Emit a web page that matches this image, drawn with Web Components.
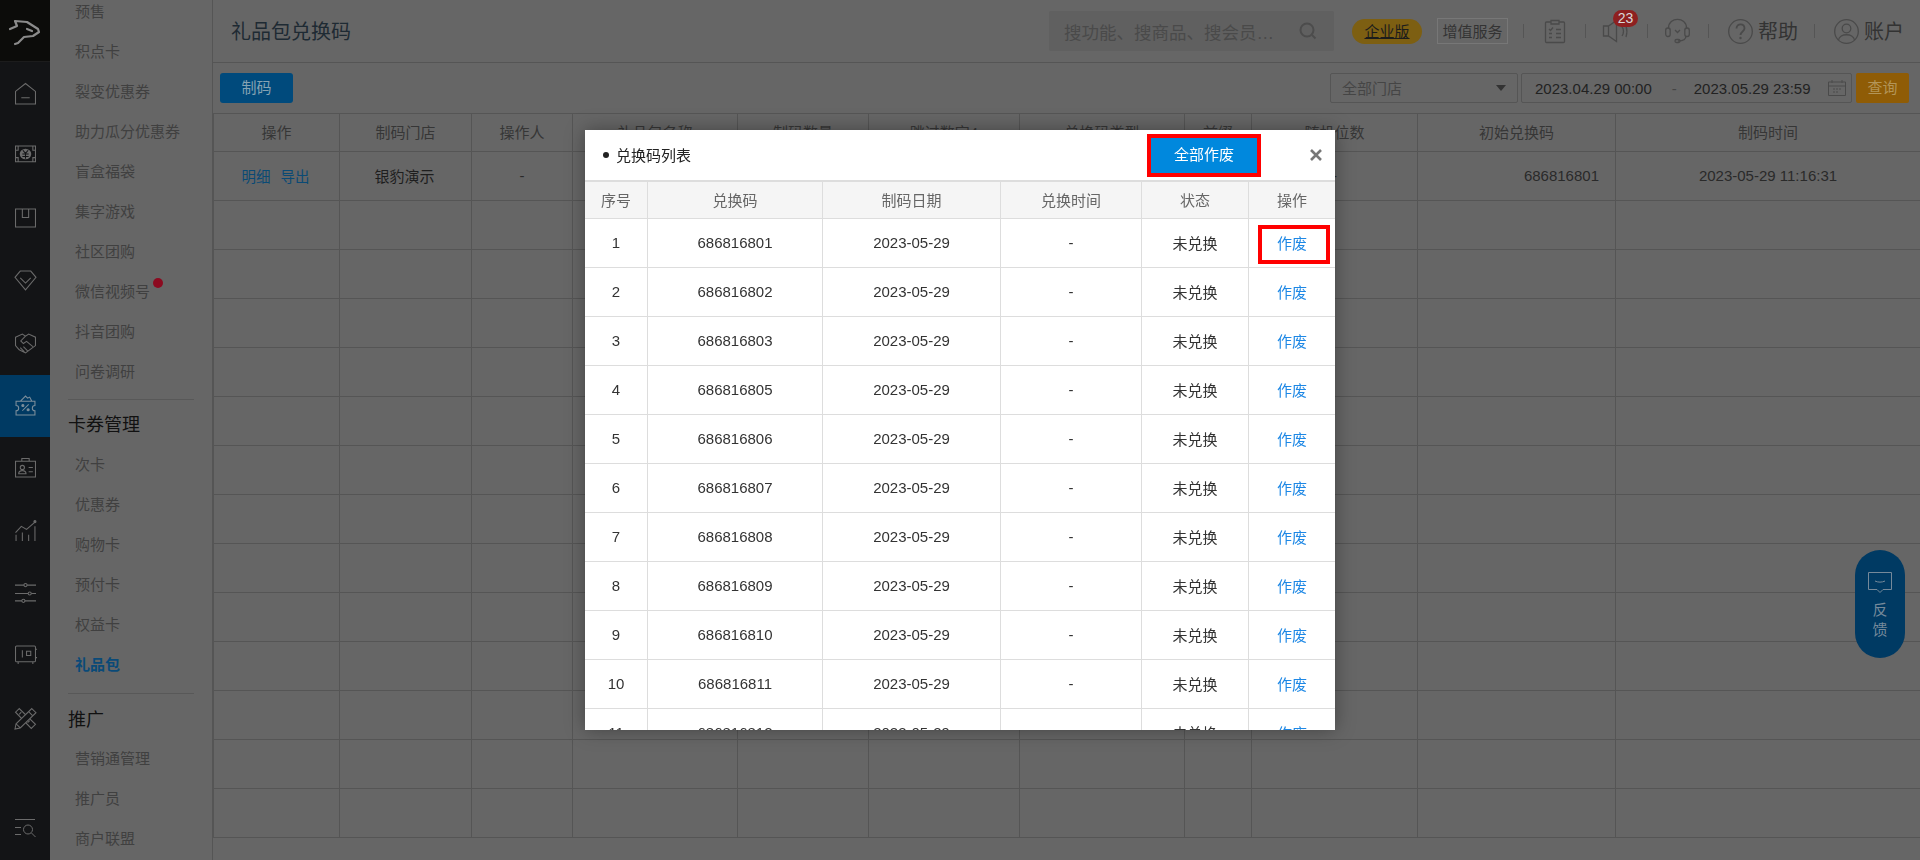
<!DOCTYPE html>
<html lang="zh">
<head>
<meta charset="utf-8">
<title>礼品包兑换码</title>
<style>
html, body { margin: 0; height: 100%; overflow: hidden; }
body {
  display: flex;
  height: 860px;
  background: #666;
  font: 15px "Liberation Sans", "Noto Sans CJK SC", sans-serif;
  color: #2a2a2a;
}
</style>
</head>
<body>
<app-rail></app-rail>
<app-menu></app-menu>
<app-main></app-main>
<feedback-fab>反<br>馈</feedback-fab>
<redeem-dialog></redeem-dialog>

<script>
const railIcons = [
  '<path d="M.5 8 10 .5 19.5 8v12H.5zM6 14h8"/>',
  '<path d="M.5 1h19v15H.5zM.5 5H3V1M19.5 5H17V1M.5 12H3v4M19.5 12H17v4"/><ellipse cx="10" cy="8.5" rx="5.5" ry="5" fill="currentColor" stroke="none"/><path d="m7.5 5 2.500 3 2.500-3M7 8.500h6M7 11h6M10 8.500V13" stroke="#131416"/>',
  '<path d="M.5 1h19v17H.5zM7 1v8h6V1"/>',
  '<path d="M5 1h10l5 6-10 12L0 7zM5 7.500l5 5 5-5"/>',
  '<path d="M.5 4 7 1l3 2 3-2 6.500 3v8L10 19l-6-3-3.500-4zM10 3 5.500 7.500 8 10l3-2 6 5M8 13l4 4M5 14l4 4"/>',
  '<path d="M1 6h18v4a2.500 2.500 0 0 0 0 5v4H1v-4a2.500 2.500 0 0 0 0-5zM5 6l5-5 2 2 2-1 2 4M7 15l6-6"/><circle cx="7.500" cy="10" r="1" fill="currentColor"/><circle cx="12.500" cy="14" r="1" fill="currentColor"/>',
  '<path d="M.5 3h19v15H.5zM6.500 3V.5h7V3"/><circle cx="7" cy="9" r="2"/><path d="M3.500 15c0-4 7-4 7 0zM13 9h4M13 13h4"/>',
  '<path d="M1 20v-6M7 20v-8M13 20v-6M19 20V6M.5 12 6 6l5 3 8-7"/><circle cx="19" cy="1.500" r="1" fill="currentColor"/>',
  '<path d="M0 2h20M0 10h20M0 17h20"/><circle cx="10" cy="2" r="1.500" fill="#131416"/><circle cx="14" cy="10" r="1.500" fill="#131416"/><circle cx="8" cy="17" r="1.500" fill="#131416"/>',
  '<path d="M1.500 1h17a1 1 0 0 1 1 1v13a1 1 0 0 1-1 1h-17a1 1 0 0 1-1-1V2a1 1 0 0 1 1-1zM7 5v7M11 6h4v4h-4zM3 16v2M17 16v2M19.500 4H21M19.500 12H21"/>',
  '<path d="M4 .5.500 4l15 15.500 4-4zM4 6l2-2M8 10l2-2M12 14l2-2"/><path d="M16 .5 20 4.500 5 19l-5 1 1-5zM13 3.500l3.500 3.500M1 15l4 4" fill="#131416"/>'
]

const railTemplate = document.createElement("template")
railTemplate.innerHTML = `
<style>
:host { display: flex; flex-direction: column; flex: none; width: 50px; height: 860px; background: #131416; color: #6b6b6b; }
.logo { height: 62px; flex: none; background: #0c0c0a; border-bottom: 1px solid #1c1c1c; box-sizing: border-box; color: #8b8b8b; }
.logo svg { display: block; width: 50px; height: 62px; }
.row { height: 62.5px; flex: none; display: flex; align-items: center; justify-content: center; }
.row svg { width: 21px; height: 21px; overflow: visible; }
.on { background: #003a63; color: #7d8f9c; }
.end { margin-top: auto; }
</style>
<div class="logo">
  <svg viewBox="0 0 50 62" fill="none" stroke="currentColor" stroke-width="2.2" stroke-linejoin="round" stroke-linecap="round">
    <path d="M10 29 17 26 15 21 27 22 38 29 39 32 33 36 24 37 18 43 15 44M27 29l5 2"/>
  </svg>
</div>
<div id="rows" style="display:contents"></div>
<div class="row end">
  <svg viewBox="0 0 21 20" fill="none" stroke="currentColor"><path d="M0 1h20M0 9h6M0 16h6"/><circle cx="13" cy="11" r="4.500"/><path d="m16.500 14.500 4 4"/></svg>
</div>
`

class AppRail extends HTMLElement {
  constructor() {
    super()
    this.attachShadow({ mode: "open" })
    this.shadowRoot.appendChild(railTemplate.content.cloneNode(true))
    this.shadowRoot.querySelector("#rows").innerHTML = railIcons.map((p, i) =>
      `<div class="row ${i == 5 ? "on" : ""}"><svg viewBox="0 0 20 20" fill="none" stroke="currentColor">${p}</svg></div>`).join("")
  }
}
customElements.define("app-rail", AppRail)

const menuTemplate = document.createElement("template")
menuTemplate.innerHTML = `
<style>
:host { display: block; flex: none; width: 163px; height: 860px; box-sizing: border-box; border-right: 1px solid #555; overflow: hidden; color: #404040; }
.list { margin-top: -8px; }
.item { height: 40px; line-height: 40px; padding-left: 25px; white-space: nowrap; }
.item.on { color: #0a4a78; font-weight: bold; }
.dot { display: inline-block; width: 10px; height: 10px; border-radius: 50%; background: #8c0a20; vertical-align: 9px; margin-left: 3px; }
hr { border: 0; border-top: 1px solid #585858; margin: 7px 18px 0; }
h4 { margin: 0; padding-left: 18px; height: 45px; line-height: 50px; font-size: 18px; font-weight: normal; color: #111; }
.second hr { margin-top: 8px; }
.second h4 { height: 45px; line-height: 52px; }
</style>
<div class="list">
  <div class="item">预售</div>
  <div class="item">积点卡</div>
  <div class="item">裂变优惠券</div>
  <div class="item">助力瓜分优惠券</div>
  <div class="item">盲盒福袋</div>
  <div class="item">集字游戏</div>
  <div class="item">社区团购</div>
  <div class="item">微信视频号<span class="dot"></span></div>
  <div class="item">抖音团购</div>
  <div class="item">问卷调研</div>
  <hr>
  <h4>卡券管理</h4>
  <div class="item">次卡</div>
  <div class="item">优惠券</div>
  <div class="item">购物卡</div>
  <div class="item">预付卡</div>
  <div class="item">权益卡</div>
  <div class="item on">礼品包</div>
  <div class="second">
    <hr>
    <h4>推广</h4>
  </div>
  <div class="item">营销通管理</div>
  <div class="item">推广员</div>
  <div class="item">商户联盟</div>
</div>
`

class AppMenu extends HTMLElement {
  constructor() {
    super()
    this.attachShadow({ mode: "open" })
    this.shadowRoot.appendChild(menuTemplate.content.cloneNode(true))
  }
}
customElements.define("app-menu", AppMenu)

const headerTemplate = document.createElement("template")
headerTemplate.innerHTML = `
<style>
:host { display: flex; align-items: center; height: 63px; box-sizing: border-box; border-bottom: 1px solid #555; padding: 0 16px 0 18px; color: #333; }
.title { font-size: 20px; color: #1e2a33; margin-right: auto; padding-bottom: 2px; }
.search { width: 285px; height: 40px; box-sizing: border-box; background: #606060; border-radius: 2px; display: flex; align-items: center; padding: 0 17px 0 15px; font-size: 17.500px; color: #4a4a4a; white-space: nowrap; justify-content: space-between; }
.search svg { width: 18px; height: 18px; }
.vip { margin-left: 18px; width: 70px; height: 25px; line-height: 25px; text-align: center; border-radius: 13px; background: #7d5f12; color: #1c1c1c; text-decoration: underline; }
.plus { margin-left: 15px; width: 71px; height: 26px; line-height: 25px; box-sizing: border-box; border: 1px solid #777; text-align: center; color: #333; }
.sep { width: 1px; height: 14px; background: #555; flex: none; }
svg.ic { flex: none; overflow: visible; }
.txt { font-size: 20px; margin-left: 5px; color: #333; padding-bottom: 2px; }
.spk { position: relative; display: block; margin-left: 17px; width: 25px; height: 24px; }
.bdg { position: absolute; left: 10px; top: -9px; width: 25px; height: 17px; line-height: 17px; border-radius: 9px; background: #8e2020; color: #d8d8d8; font-size: 14px; text-align: center; }
</style>
<span class="title">礼品包兑换码</span>
<div class="search">搜功能、搜商品、搜会员…
  <svg viewBox="0 0 18 18" fill="none" stroke="#4c4c4c" stroke-width="2"><circle cx="8" cy="8" r="6.500"/><path d="m13 13 3.500 3.500"/></svg>
</div>
<span class="vip">企业版</span>
<span class="plus">增值服务</span>
<span class="sep" style="margin-left:15px"></span>
<svg class="ic" style="margin-left:21px" width="20" height="24" viewBox="0 0 20 24" fill="none" stroke="#4a4a4a" stroke-width="1.300"><path d="M6 3H1.500a1 1 0 0 0-1 1v18.500a1 1 0 0 0 1 1h17a1 1 0 0 0 1-1V4a1 1 0 0 0-1-1H14M6 1.500h8V5H6zM4 10l1.500 1.500L8 8.500M11 10.500h5M11 14.500h5M11 18.500h5M4 14.500h3M4 18.500h3"/></svg>
<span class="sep" style="margin-left:20px"></span>
<span class="spk">
  <svg class="ic" style="display:block" width="25" height="24" viewBox="0 0 25 24" fill="none" stroke="#4a4a4a" stroke-width="1.300"><path d="M.5 7h5l8-5.500v21l-8-5.500h-5zM5.500 7v10M19 8c2 2 2 6 0 9M23 7c1 3 1 8 0 11"/></svg>
  <span class="bdg">23</span>
</span>
<span class="sep" style="margin-left:19px"></span>
<svg class="ic" style="margin-left:17px" width="25" height="26" viewBox="0 0 25 26" fill="none" stroke="#4a4a4a" stroke-width="1.300"><path d="M3.500 10C3.500-1.500 21.500-1.500 21.500 10M21 18c0 3-3 5-8 5"/><rect x=".7" y="10" width="4.500" height="8.500" rx="2.200"/><rect x="19.800" y="10" width="4.500" height="8.500" rx="2.200"/><rect x="10" y="21.500" width="5" height="3" rx="1.500"/><path d="M10 12l2.500 2.500L15 12"/></svg>
<span class="sep" style="margin-left:18px"></span>
<svg class="ic" style="margin-left:19px" width="25" height="25" viewBox="0 0 25 25" fill="none" stroke="#4a4a4a" stroke-width="1.300"><circle cx="12.500" cy="12.500" r="11.800"/><path d="M8.500 9.500c0-5.500 8-5.500 8 0 0 3-4 3-4 6.500" stroke-width="1.800"/><circle cx="12.500" cy="19" r="1.200" fill="#4a4a4a" stroke="none"/></svg>
<span class="txt">帮助</span>
<span class="sep" style="margin-left:16px"></span>
<svg class="ic" style="margin-left:19px" width="25" height="25" viewBox="0 0 25 25" fill="none" stroke="#4a4a4a" stroke-width="1.300"><circle cx="12.500" cy="12.500" r="11.800"/><circle cx="12.500" cy="9.500" r="4.300"/><path d="M4.500 21c1-7 15-7 16 0"/></svg>
<span class="txt">账户</span>
`

class AppHeader extends HTMLElement {
  constructor() {
    super()
    this.attachShadow({ mode: "open" })
    this.shadowRoot.appendChild(headerTemplate.content.cloneNode(true))
  }
}
customElements.define("app-header", AppHeader)

const toolbarTemplate = document.createElement("template")
toolbarTemplate.innerHTML = `
<style>
:host { display: flex; align-items: center; height: 50px; padding: 0 11px 0 7px; color: #222; }
.make { width: 73px; height: 30px; line-height: 30px; text-align: center; border-radius: 3px; background: #004a7c; color: #86a3b3; }
.field { height: 30px; box-sizing: border-box; border: 1px solid #555; border-radius: 2px; display: flex; align-items: center; }
.shop { margin-left: auto; width: 188px; padding: 0 11px 1px; justify-content: space-between; color: #454545; }
.shop i { width: 0; height: 0; border: 5px solid transparent; border-top: 6px solid #333; border-bottom: 0; }
.date { margin-left: 3px; width: 331px; padding-left: 13px; white-space: pre; }
.date b { font-weight: normal; margin: 0 17px 0 20px; color: #454545; }
.date svg { margin-left: 17px; }
.query { margin-left: 4px; width: 53px; height: 30px; line-height: 30px; text-align: center; border-radius: 2px; background: #8f5c06; color: #b39558; }
</style>
<span class="make">制码</span>
<span class="field shop">全部门店<i></i></span>
<span class="field date">2023.04.29 00:00<b>-</b>2023.05.29 23:59<svg width="18" height="16" viewBox="0 0 18 16" fill="none" stroke="#4a4a4a"><path d="M.5 2h17v13.500H.5zM.5 6h17M4 0v3M14 0v3M5 9h2M8 9h2M11 9h2M5 12h2M8 12h2"/></svg></span>
<span class="query">查询</span>
`

class AppToolbar extends HTMLElement {
  constructor() {
    super()
    this.attachShadow({ mode: "open" })
    this.shadowRoot.appendChild(toolbarTemplate.content.cloneNode(true))
  }
}
customElements.define("app-toolbar", AppToolbar)

const packTemplate = document.createElement("template")
packTemplate.innerHTML = `
<style>
:host { display: block; border-top: 1px solid #555; }
.row { display: grid; grid-template-columns: 126px 132px 101px 165px 131px 151px 165px 67px 166px 198px 305px; height: 49px; box-sizing: border-box; border-bottom: 1px solid #555; }
.row.head { height: 38px; color: #363636; }
.row > span { display: flex; align-items: center; justify-content: center; box-sizing: border-box; border-left: 1px solid #555; white-space: nowrap; padding-bottom: 2px; }
.row > span.num { justify-content: flex-end; padding-right: 16px; }
.row > span.ops { padding-right: 2px; font-size: 14.500px; }
.row > span.shop { padding-right: 2px; color: #1e1e1e; }
a { color: #0a4a75; margin: 0 5px; }
</style>
<div class="row head"><span>操作</span><span>制码门店</span><span>操作人</span><span>礼品包名称</span><span>制码数量</span><span>跳过数字4</span><span>兑换码类型</span><span>前缀</span><span>随机位数</span><span>初始兑换码</span><span>制码时间</span></div>
<div class="row"><span class="ops"><a>明细</a><a>导出</a></span><span class="shop">银豹演示</span><span>-</span><span></span><span></span><span></span><span></span><span></span><span>-</span><span class="num">686816801</span><span>2023-05-29 11:16:31</span></div>
<div id="empty" style="display:contents"></div>
`

class PackTable extends HTMLElement {
  constructor() {
    super()
    this.attachShadow({ mode: "open" })
    this.shadowRoot.appendChild(packTemplate.content.cloneNode(true))
    // rows below the first one are just empty grid lines
    const blank = `<div class="row">${"<span></span>".repeat(11)}</div>`
    this.shadowRoot.querySelector("#empty").innerHTML = blank.repeat(13)
  }
}
customElements.define("pack-table", PackTable)

const mainTemplate = document.createElement("template")
mainTemplate.innerHTML = `
<style>
:host { display: block; flex: 1; min-width: 0; height: 860px; overflow: hidden; }
</style>
<app-header></app-header>
<app-toolbar></app-toolbar>
<pack-table></pack-table>
`

class AppMain extends HTMLElement {
  constructor() {
    super()
    this.attachShadow({ mode: "open" })
    this.shadowRoot.appendChild(mainTemplate.content.cloneNode(true))
  }
}
customElements.define("app-main", AppMain)

const fabTemplate = document.createElement("template")
fabTemplate.innerHTML = `
<style>
:host { position: fixed; left: 1855px; top: 550px; width: 50px; height: 108px; border-radius: 25px; background: #003a63; color: #75899a; display: flex; flex-direction: column; align-items: center; box-sizing: border-box; padding-top: 22px; font-size: 15px; line-height: 20px; text-align: center; }
svg { display: block; margin-bottom: 7px; }
</style>
<svg width="24" height="21" viewBox="0 0 24 21" fill="none" stroke="currentColor"><path d="M.5.500h23v17H15l-3 3-3-3H.5zM7 9c3 1.500 7 1.500 10 0"/></svg>
<div><slot></slot></div>
`

class FeedbackFab extends HTMLElement {
  constructor() {
    super()
    this.attachShadow({ mode: "open" })
    this.shadowRoot.appendChild(fabTemplate.content.cloneNode(true))
  }
}
customElements.define("feedback-fab", FeedbackFab)

const dialogTemplate = document.createElement("template")
dialogTemplate.innerHTML = `
<style>
:host { position: fixed; inset: 0; display: flex; align-items: center; justify-content: center; }
.box { width: 750px; height: 600px; background: #fff; overflow: hidden; box-shadow: 0 0 18px rgba(0,0,0,.35); color: #333; }
.top { height: 50px; display: flex; align-items: center; padding: 0 13px 0 18px; border-bottom: 1px solid #ddd; color: #222; }
.name { margin-left: 7px; padding-bottom: 2px; }
.dot { width: 6px; height: 6px; border-radius: 50%; background: #222; }
.all { margin-left: auto; width: 106px; height: 35px; line-height: 34px; text-align: center; background: #0088dd; color: #fff; outline: 4px solid #ff0000; }
.close { margin-left: 53px; display: block; }
.row { display: grid; grid-template-columns: 62px 175px 178px 141px 107px 87px; height: 49px; box-sizing: border-box; border-bottom: 1px solid #ddd; }
.row.head { height: 38px; background: #f5f5f5; color: #666; border-top: 1px solid #ddd; }
.row > span { display: flex; align-items: center; justify-content: center; box-sizing: border-box; border-left: 1px solid #ddd; position: relative; padding-bottom: 2px; }
.row > span:first-child { border-left: 0; }
a { color: #1e88e5; }
.mark { position: absolute; left: 9px; top: 6px; width: 72px; height: 39px; box-sizing: border-box; border: 4px solid #ff0000; }
</style>
<div class="box">
  <div class="top">
    <span class="dot"></span><span class="name">兑换码列表</span>
    <span class="all">全部作废</span>
    <svg class="close" width="12" height="12" viewBox="0 0 12 12" stroke="#777" stroke-width="2.600"><path d="m1 1 10 10M11 1 1 11"/></svg>
  </div>
  <div class="row head"><span>序号</span><span>兑换码</span><span>制码日期</span><span>兑换时间</span><span>状态</span><span>操作</span></div>
  <div id="rows"></div>
</div>
`

const codes = [686816801, 686816802, 686816803, 686816805, 686816806, 686816807, 686816808, 686816809, 686816810, 686816811, 686816812]

class RedeemDialog extends HTMLElement {
  constructor() {
    super()
    this.attachShadow({ mode: "open" })
    this.shadowRoot.appendChild(dialogTemplate.content.cloneNode(true))
    this.shadowRoot.querySelector("#rows").innerHTML = codes.map((code, i) => `
      <div class="row"><span>${i + 1}</span><span>${code}</span><span>2023-05-29</span><span>-</span><span>未兑换</span><span><a>作废</a>${i == 0 ? '<i class="mark"></i>' : ""}</span></div>`).join("")
  }
}
customElements.define("redeem-dialog", RedeemDialog)
</script>
</body>
</html>
